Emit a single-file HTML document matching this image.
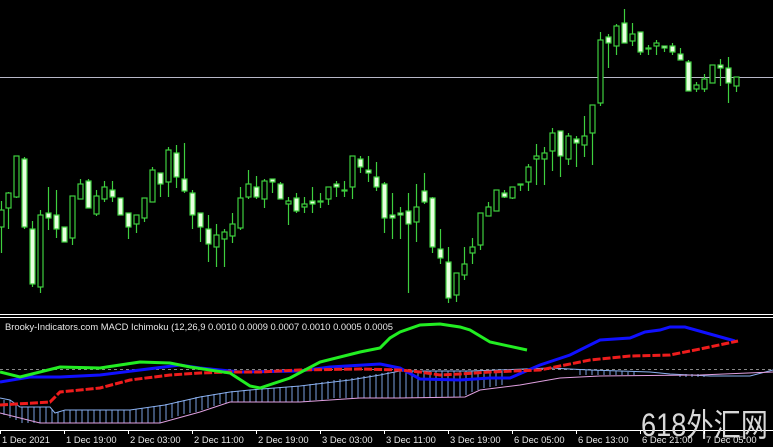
<!DOCTYPE html>
<html><head><meta charset="utf-8"><style>
html,body{margin:0;padding:0;background:#000;width:773px;height:447px;overflow:hidden}
svg{display:block}
.t{font-family:"Liberation Sans",sans-serif;font-size:9.4px;fill:#e8e8e8}
</style></head><body>
<svg width="773" height="447" viewBox="0 0 773 447" xmlns="http://www.w3.org/2000/svg">
<rect width="773" height="447" fill="#000"/>
<line x1="0" y1="77.5" x2="773" y2="77.5" stroke="#b8b8c8" stroke-width="1"/>
<g stroke="#3ecf3e" stroke-width="1.2">
<line x1="1.5" y1="201" x2="1.5" y2="253"/><rect x="-1" y="210" width="5" height="17" fill="#000"/>
<line x1="8.5" y1="192" x2="8.5" y2="229"/><rect x="6" y="193" width="5" height="15" fill="#000"/>
<line x1="16.5" y1="156" x2="16.5" y2="198"/><rect x="14" y="156" width="5" height="41" fill="#000"/>
<line x1="24.5" y1="157" x2="24.5" y2="229"/><rect x="22" y="159" width="5" height="68" fill="#e8ffe0"/>
<line x1="32.5" y1="221" x2="32.5" y2="287"/><rect x="30" y="229" width="5" height="55" fill="#e8ffe0"/>
<line x1="40.5" y1="210" x2="40.5" y2="293"/><rect x="38" y="215" width="5" height="72" fill="#000"/>
<line x1="48.5" y1="187" x2="48.5" y2="230"/><rect x="46" y="213" width="5" height="5" fill="#e8ffe0"/>
<line x1="56.5" y1="190" x2="56.5" y2="238"/><rect x="54" y="215" width="5" height="14" fill="#e8ffe0"/>
<line x1="64.5" y1="227" x2="64.5" y2="242"/><rect x="62" y="227" width="5" height="15" fill="#e8ffe0"/>
<line x1="72.5" y1="196" x2="72.5" y2="245"/><rect x="70" y="196" width="5" height="42" fill="#000"/>
<line x1="80.5" y1="179" x2="80.5" y2="199"/><rect x="78" y="184" width="5" height="15" fill="#000"/>
<line x1="88.5" y1="179" x2="88.5" y2="208"/><rect x="86" y="181" width="5" height="27" fill="#e8ffe0"/>
<line x1="96.5" y1="190" x2="96.5" y2="216"/><rect x="94" y="196" width="5" height="18" fill="#000"/>
<line x1="104.5" y1="181" x2="104.5" y2="202"/><rect x="102" y="187" width="5" height="12" fill="#000"/>
<line x1="112.5" y1="181" x2="112.5" y2="202"/><rect x="110" y="190" width="5" height="7" fill="#e8ffe0"/>
<line x1="120.5" y1="198" x2="120.5" y2="215"/><rect x="118" y="198" width="5" height="17" fill="#e8ffe0"/>
<line x1="128.5" y1="213" x2="128.5" y2="239"/><rect x="126" y="213" width="5" height="14" fill="#e8ffe0"/>
<line x1="136.5" y1="215" x2="136.5" y2="233"/><rect x="134" y="215" width="5" height="9" fill="#000"/>
<line x1="144.5" y1="198" x2="144.5" y2="222"/><rect x="142" y="198" width="5" height="20" fill="#000"/>
<line x1="152.5" y1="167" x2="152.5" y2="202"/><rect x="150" y="170" width="5" height="32" fill="#000"/>
<line x1="160.5" y1="173" x2="160.5" y2="197"/><rect x="158" y="173" width="5" height="11" fill="#e8ffe0"/>
<line x1="168.5" y1="147" x2="168.5" y2="197"/><rect x="166" y="150" width="5" height="32" fill="#000"/>
<line x1="176.5" y1="145" x2="176.5" y2="188"/><rect x="174" y="153" width="5" height="24" fill="#e8ffe0"/>
<line x1="184.5" y1="143" x2="184.5" y2="193"/><rect x="182" y="179" width="5" height="12" fill="#e8ffe0"/>
<line x1="192.5" y1="190" x2="192.5" y2="229"/><rect x="190" y="193" width="5" height="22" fill="#e8ffe0"/>
<line x1="200.5" y1="213" x2="200.5" y2="242"/><rect x="198" y="213" width="5" height="14" fill="#e8ffe0"/>
<line x1="208.5" y1="215" x2="208.5" y2="262"/><rect x="206" y="229" width="5" height="15" fill="#e8ffe0"/>
<line x1="216.5" y1="224" x2="216.5" y2="267"/><rect x="214" y="235" width="5" height="12" fill="#000"/>
<line x1="224.5" y1="229" x2="224.5" y2="267"/><rect x="222" y="232" width="5" height="7" fill="#000"/>
<line x1="232.5" y1="213" x2="232.5" y2="243"/><rect x="230" y="224" width="5" height="12" fill="#000"/>
<line x1="240.5" y1="187" x2="240.5" y2="230"/><rect x="238" y="198" width="5" height="30" fill="#000"/>
<line x1="248.5" y1="170" x2="248.5" y2="199"/><rect x="246" y="184" width="5" height="13" fill="#000"/>
<line x1="256.5" y1="176" x2="256.5" y2="199"/><rect x="254" y="187" width="5" height="10" fill="#e8ffe0"/>
<line x1="264.5" y1="179" x2="264.5" y2="208"/><rect x="262" y="181" width="5" height="18" fill="#000"/>
<line x1="272.5" y1="179" x2="272.5" y2="193"/><rect x="270" y="179" width="5" height="3" fill="#e8ffe0"/>
<line x1="280.5" y1="182" x2="280.5" y2="199"/><rect x="278" y="184" width="5" height="15" fill="#e8ffe0"/>
<line x1="288.5" y1="197" x2="288.5" y2="225"/><rect x="286" y="201" width="5" height="3" fill="#000"/>
<line x1="296.5" y1="193" x2="296.5" y2="213"/><rect x="294" y="198" width="5" height="13" fill="#e8ffe0"/>
<line x1="304.5" y1="197" x2="304.5" y2="213"/><rect x="302" y="204" width="5" height="3" fill="#000"/>
<line x1="312.5" y1="187" x2="312.5" y2="213"/><rect x="310" y="201" width="5" height="3" fill="#e8ffe0"/>
<line x1="320.5" y1="193" x2="320.5" y2="208"/><rect x="318" y="201" width="5" height="1" fill="#000"/>
<line x1="328.5" y1="187" x2="328.5" y2="205"/><rect x="326" y="187" width="5" height="12" fill="#000"/>
<line x1="336.5" y1="181" x2="336.5" y2="197"/><rect x="334" y="184" width="5" height="3" fill="#e8ffe0"/>
<line x1="344.5" y1="181" x2="344.5" y2="197"/><rect x="342" y="190" width="5" height="1" fill="#000"/>
<line x1="352.5" y1="156" x2="352.5" y2="199"/><rect x="350" y="156" width="5" height="31" fill="#000"/>
<line x1="360.5" y1="156" x2="360.5" y2="173"/><rect x="358" y="159" width="5" height="8" fill="#e8ffe0"/>
<line x1="368.5" y1="156" x2="368.5" y2="182"/><rect x="366" y="170" width="5" height="3" fill="#e8ffe0"/>
<line x1="376.5" y1="162" x2="376.5" y2="191"/><rect x="374" y="177" width="5" height="10" fill="#e8ffe0"/>
<line x1="384.5" y1="182" x2="384.5" y2="233"/><rect x="382" y="184" width="5" height="34" fill="#e8ffe0"/>
<line x1="392.5" y1="193" x2="392.5" y2="239"/><rect x="390" y="215" width="5" height="3" fill="#e8ffe0"/>
<line x1="400.5" y1="207" x2="400.5" y2="239"/><rect x="398" y="213" width="5" height="2" fill="#e8ffe0"/>
<line x1="408.5" y1="193" x2="408.5" y2="293"/><rect x="406" y="211" width="5" height="13" fill="#e8ffe0"/>
<line x1="416.5" y1="184" x2="416.5" y2="242"/><rect x="414" y="207" width="5" height="15" fill="#000"/>
<line x1="424.5" y1="173" x2="424.5" y2="204"/><rect x="422" y="191" width="5" height="11" fill="#e8ffe0"/>
<line x1="432.5" y1="197" x2="432.5" y2="253"/><rect x="430" y="198" width="5" height="49" fill="#e8ffe0"/>
<line x1="440.5" y1="229" x2="440.5" y2="264"/><rect x="438" y="249" width="5" height="9" fill="#e8ffe0"/>
<line x1="448.5" y1="247" x2="448.5" y2="303"/><rect x="446" y="262" width="5" height="36" fill="#e8ffe0"/>
<line x1="456.5" y1="273" x2="456.5" y2="302"/><rect x="454" y="273" width="5" height="22" fill="#000"/>
<line x1="464.5" y1="247" x2="464.5" y2="280"/><rect x="462" y="264" width="5" height="11" fill="#000"/>
<line x1="472.5" y1="238" x2="472.5" y2="264"/><rect x="470" y="247" width="5" height="6" fill="#000"/>
<line x1="480.5" y1="213" x2="480.5" y2="250"/><rect x="478" y="213" width="5" height="32" fill="#000"/>
<line x1="488.5" y1="202" x2="488.5" y2="216"/><rect x="486" y="207" width="5" height="9" fill="#000"/>
<line x1="496.5" y1="190" x2="496.5" y2="211"/><rect x="494" y="190" width="5" height="21" fill="#000"/>
<line x1="504.5" y1="190" x2="504.5" y2="198"/><rect x="502" y="193" width="5" height="4" fill="#e8ffe0"/>
<line x1="512.5" y1="187" x2="512.5" y2="199"/><rect x="510" y="187" width="5" height="11" fill="#000"/>
<line x1="520.5" y1="184" x2="520.5" y2="191"/><rect x="518" y="184" width="5" height="1" fill="#000"/>
<line x1="528.5" y1="164" x2="528.5" y2="191"/><rect x="526" y="167" width="5" height="15" fill="#000"/>
<line x1="536.5" y1="144" x2="536.5" y2="185"/><rect x="534" y="156" width="5" height="3" fill="#000"/>
<line x1="544.5" y1="147" x2="544.5" y2="185"/><rect x="542" y="153" width="5" height="6" fill="#000"/>
<line x1="552.5" y1="128" x2="552.5" y2="171"/><rect x="550" y="133" width="5" height="18" fill="#000"/>
<line x1="560.5" y1="131" x2="560.5" y2="177"/><rect x="558" y="131" width="5" height="25" fill="#e8ffe0"/>
<line x1="568.5" y1="133" x2="568.5" y2="165"/><rect x="566" y="136" width="5" height="23" fill="#000"/>
<line x1="576.5" y1="136" x2="576.5" y2="167"/><rect x="574" y="139" width="5" height="4" fill="#e8ffe0"/>
<line x1="584.5" y1="116" x2="584.5" y2="157"/><rect x="582" y="136" width="5" height="9" fill="#000"/>
<line x1="592.5" y1="105" x2="592.5" y2="165"/><rect x="590" y="105" width="5" height="28" fill="#000"/>
<line x1="600.5" y1="32" x2="600.5" y2="106"/><rect x="598" y="40" width="5" height="63" fill="#000"/>
<line x1="608.5" y1="34" x2="608.5" y2="68"/><rect x="606" y="37" width="5" height="6" fill="#e8ffe0"/>
<line x1="616.5" y1="24" x2="616.5" y2="55"/><rect x="614" y="26" width="5" height="20" fill="#000"/>
<line x1="624.5" y1="9" x2="624.5" y2="43"/><rect x="622" y="23" width="5" height="20" fill="#e8ffe0"/>
<line x1="632.5" y1="23" x2="632.5" y2="46"/><rect x="630" y="34" width="5" height="7" fill="#000"/>
<line x1="640.5" y1="32" x2="640.5" y2="55"/><rect x="638" y="32" width="5" height="20" fill="#e8ffe0"/>
<line x1="648.5" y1="45" x2="648.5" y2="55"/><rect x="646" y="48" width="5" height="1" fill="#000"/>
<line x1="656.5" y1="40" x2="656.5" y2="55"/><rect x="654" y="43" width="5" height="3" fill="#000"/>
<line x1="664.5" y1="46" x2="664.5" y2="52"/><rect x="662" y="46" width="5" height="2" fill="#e8ffe0"/>
<line x1="672.5" y1="43" x2="672.5" y2="55"/><rect x="670" y="46" width="5" height="6" fill="#e8ffe0"/>
<line x1="680.5" y1="48" x2="680.5" y2="60"/><rect x="678" y="54" width="5" height="6" fill="#e8ffe0"/>
<line x1="688.5" y1="60" x2="688.5" y2="91"/><rect x="686" y="62" width="5" height="29" fill="#e8ffe0"/>
<line x1="696.5" y1="82" x2="696.5" y2="92"/><rect x="694" y="85" width="5" height="4" fill="#000"/>
<line x1="704.5" y1="74" x2="704.5" y2="92"/><rect x="702" y="79" width="5" height="10" fill="#000"/>
<line x1="712.5" y1="65" x2="712.5" y2="83"/><rect x="710" y="65" width="5" height="18" fill="#000"/>
<line x1="720.5" y1="59" x2="720.5" y2="86"/><rect x="718" y="65" width="5" height="3" fill="#e8ffe0"/>
<line x1="728.5" y1="57" x2="728.5" y2="103"/><rect x="726" y="68" width="5" height="15" fill="#e8ffe0"/>
<line x1="736.5" y1="77" x2="736.5" y2="92"/><rect x="734" y="77" width="5" height="9" fill="#000"/>
</g>
<line x1="0" y1="314.5" x2="773" y2="314.5" stroke="#fff" stroke-width="1"/>
<line x1="0" y1="317.5" x2="773" y2="317.5" stroke="#fff" stroke-width="1"/>
<text x="5" y="330" class="t" textLength="388" lengthAdjust="spacingAndGlyphs">Brooky-Indicators.com MACD Ichimoku (12,26,9 0.0010 0.0009 0.0007 0.0010 0.0005 0.0005</text>
<line x1="0" y1="369.5" x2="773" y2="369.5" stroke="#888" stroke-dasharray="3,3" stroke-width="1"/>
<g stroke="#7aa0e0" stroke-width="1">
<path d="M4 400V415M10 400V418M16 404V420M22 407V423M28 407V423M34 407V423M40 407V423M46 407V423M52 409V423M58 412V423M64 410V423M70 410V423M76 410V423M82 410V423M88 410V423M94 410V423M100 410V423M106 410V423M112 410V423M118 410V423M124 410V423M130 410V423M136 409V423M142 408V423M148 407V423M154 406V423M160 405V423M166 404V420M172 403V418M178 401V416M184 400V414M190 399V413M196 397V412M202 396V410M208 395V408M214 394V406M220 393V404M226 392V403M232 391V402M238 391V402M244 390V402M250 390V402M256 389V402M262 389V402M268 388V402M274 388V402M280 387V402M286 387V402M292 386V402M298 386V402M304 385V402M310 384V401M316 383V400M322 382V400M328 381V399M334 380V398M340 379V398M346 379V398M352 378V398M358 377V398M364 376V398M370 375V398M376 374V398M382 373V398M388 372V398M394 372V398M400 371V398M406 371V398M412 371V398M418 371V398M424 371V398M430 371V398M436 371V398M442 371V397M448 371V397M454 371V397M460 371V397M466 371V395M472 371V392M478 371V390M484 371V388M490 371V387M496 371V386M502 371V385"/>
<path d="M580 370V375M586 370V375M592 370V375M598 370V375M604 371V375M610 371V375M616 371V375M622 371V375M628 372V375M634 372V375M680 374V377M686 374V377M692 374V377M698 374V377M704 375V377"/>
</g>
<polyline fill="none" stroke="#8ab0f0" stroke-width="1" points="0,398 10,400 20,407 50,407 55,413 65,410 130,410 165,405 200,397 230,392 250,390 300,386 350,380 380,375 400,371 470,371 500,370 550,368 590,370 620,371 650,372 670,374 710,376 750,376 773,370"/>
<polyline fill="none" stroke="#e0a0e0" stroke-width="1" points="0,413 40,423 160,423 200,412 230,402 300,402 360,398 400,398 465,397 480,390 520,385 560,378 600,376 700,375 773,372"/>
<polyline fill="none" stroke="#1010ff" stroke-width="3" points="0,382 30,377 60,377 100,375 140,370 180,365 200,368 240,372 300,371 330,367 380,364 400,368 420,379 460,380 490,378 510,378 540,365 570,355 600,340 630,338 645,332 660,330 670,327 685,327 735,341"/>
<polyline fill="none" stroke="#ee1c1c" stroke-width="3" stroke-dasharray="8,2" points="0,405 50,402 60,392 100,388 130,380 170,375 200,373 230,372 260,372 300,370 360,369 400,370 420,372 440,375 460,374 490,372 540,370 590,360 630,356 670,355 700,349 738,341"/>
<polyline fill="none" stroke="#22ee22" stroke-width="3" points="0,372 20,377 60,367 100,368 140,362 170,363 190,367 230,373 250,386 260,388 290,378 320,362 360,352 380,348 390,338 400,332 420,325 440,324 460,327 470,330 490,342 527,350"/>
<line x1="0" y1="430.5" x2="773" y2="430.5" stroke="#fff" stroke-width="1"/>
<text x="641" y="436" font-family="'Liberation Sans','Noto Sans CJK SC',sans-serif" font-size="32" fill="#d8d8d8" textLength="127" lengthAdjust="spacingAndGlyphs">618外汇网</text>
<g stroke="#fff" stroke-width="1">
<path d="M0.5 430V434M64.5 430V434M128.5 430V434M192.5 430V434M256.5 430V434M320.5 430V434M384.5 430V434M448.5 430V434M512.5 430V434M576.5 430V434M640.5 430V434M704.5 430V434"/>
</g>
<g class="t">
<text x="2" y="443">1 Dec 2021</text>
<text x="66" y="443">1 Dec 19:00</text>
<text x="130" y="443">2 Dec 03:00</text>
<text x="194" y="443">2 Dec 11:00</text>
<text x="258" y="443">2 Dec 19:00</text>
<text x="322" y="443">3 Dec 03:00</text>
<text x="386" y="443">3 Dec 11:00</text>
<text x="450" y="443">3 Dec 19:00</text>
<text x="514" y="443">6 Dec 05:00</text>
<text x="578" y="443">6 Dec 13:00</text>
<text x="642" y="443">6 Dec 21:00</text>
<text x="706" y="443">7 Dec 05:00</text>
</g>
</svg>
</body></html>
